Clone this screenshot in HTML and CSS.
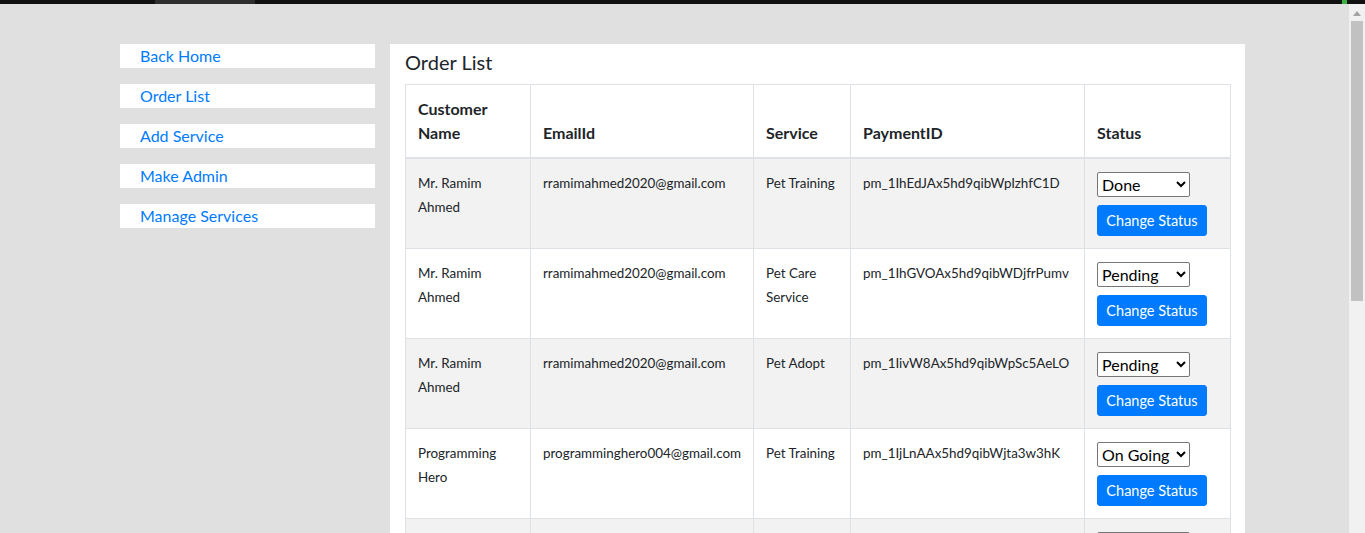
FILE: index.html
```html
<!DOCTYPE html>
<html lang="en">
<head>
<meta charset="utf-8">
<title>Order List</title>
<link rel="stylesheet" href="styles.css">
</head>
<body>
<div class="chrome-bar"><span class="seg"></span><span class="green"></span></div>
<div class="layout">
  <nav class="sidebar">
    <a class="side-link" href="#">Back Home</a>
    <a class="side-link" href="#">Order List</a>
    <a class="side-link" href="#">Add Service</a>
    <a class="side-link" href="#">Make Admin</a>
    <a class="side-link" href="#">Manage Services</a>
  </nav>
  <main class="panel">
    <h5 class="title">Order List</h5>
    <table class="orders">
      <colgroup>
        <col class="c-name"><col class="c-email"><col class="c-service"><col class="c-pay"><col class="c-status">
      </colgroup>
      <thead>
        <tr><th>Customer Name</th><th>EmailId</th><th>Service</th><th>PaymentID</th><th>Status</th></tr>
      </thead>
      <tbody>
        <tr><td>Mr. Ramim Ahmed</td><td>rramimahmed2020@gmail.com</td><td>Pet Training</td><td>pm_1IhEdJAx5hd9qibWpIzhfC1D</td>
          <td><div class="status"><select class="sel"><option>Pending</option><option>On Going</option><option selected>Done</option></select><button class="btn">Change Status</button></div></td></tr>
        <tr><td>Mr. Ramim Ahmed</td><td>rramimahmed2020@gmail.com</td><td>Pet Care Service</td><td>pm_1IhGVOAx5hd9qibWDjfrPumv</td>
          <td><div class="status"><select class="sel"><option selected>Pending</option><option>On Going</option><option>Done</option></select><button class="btn">Change Status</button></div></td></tr>
        <tr><td>Mr. Ramim Ahmed</td><td>rramimahmed2020@gmail.com</td><td>Pet Adopt</td><td>pm_1IivW8Ax5hd9qibWpSc5AeLO</td>
          <td><div class="status"><select class="sel"><option selected>Pending</option><option>On Going</option><option>Done</option></select><button class="btn">Change Status</button></div></td></tr>
        <tr><td>Programming Hero</td><td>programminghero004@gmail.com</td><td>Pet Training</td><td>pm_1IjLnAAx5hd9qibWjta3w3hK</td>
          <td><div class="status"><select class="sel"><option>Pending</option><option selected>On Going</option><option>Done</option></select><button class="btn">Change Status</button></div></td></tr>
        <tr><td>Programming Hero</td><td>programminghero004@gmail.com</td><td>Pet Adopt</td><td>pm_1IjLpZAx5hd9qibWkR2vX8aQ</td>
          <td><div class="status"><select class="sel"><option selected>Pending</option><option>On Going</option><option>Done</option></select><button class="btn">Change Status</button></div></td></tr>
        <tr><td>Mr. Ramim Ahmed</td><td>rramimahmed2020@gmail.com</td><td>Pet Care Service</td><td>pm_1IjMqWAx5hd9qibWnT4cQ2pL</td>
          <td><div class="status"><select class="sel"><option selected>Pending</option><option>On Going</option><option>Done</option></select><button class="btn">Change Status</button></div></td></tr>
      </tbody>
    </table>
  </main>
</div>
<div class="fake-scroll" aria-hidden="true">
  <svg class="arrow" width="8" height="5" viewBox="0 0 8 5"><path d="M4 0 L8 5 L0 5 Z" fill="#a3a3a3"/></svg>
  <div class="thumb"></div>
</div>
</body>
</html>
```

FILE: styles.css
```css
html, body {
  margin: 0;
  padding: 0;
}
body {
  background: #e0e0e0;
  font-family: "Lato", "Noto Sans", sans-serif;
  color: #212529;
}
.chrome-bar {
  height: 4px;
  background: #111;
  display: flex;
}
.chrome-bar .seg {
  margin-left: 155px;
  width: 100px;
  background: #2e2e2e;
}
.chrome-bar .green {
  margin-left: auto;
  margin-right: 18px;
  width: 5px;
  background: #3cb043;
}
.layout {
  display: flex;
  align-items: flex-start;
  gap: 15px;
  padding: 40px 0 40px 120px;
}
.sidebar {
  width: 255px;
  display: flex;
  flex-direction: column;
  gap: 16px;
  flex: none;
}
.side-link {
  display: block;
  background: #fff;
  color: #007bff;
  text-decoration: none;
  font-size: 16px;
  line-height: 24px;
  padding-left: 20px;
}
.panel {
  width: 825px;
  background: #fff;
  padding: 7px 15px 20px;
  flex: none;
}
.title {
  margin: 0 0 9px;
  font-size: 20px;
  font-weight: 400;
  line-height: 23px;
  padding-bottom: 1px;
}
.orders {
  width: 825px;
  table-layout: fixed;
  border-collapse: collapse;
}
.c-name { width: 125px; }
.c-email { width: 223px; }
.c-service { width: 97px; }
.c-pay { width: 234px; }
.c-status { width: 146px; }
.orders th, .orders td {
  border: 1px solid #dee2e6;
  padding: 12px;
  text-align: left;
}
.orders th {
  vertical-align: bottom;
  font-size: 16px;
  font-weight: 700;
  line-height: 24px;
  border-bottom: 2px solid #dee2e6;
}
.orders td {
  vertical-align: top;
  font-size: 13.4px;
  line-height: 24px;
  height: 65px;
  box-sizing: content-box;
}
.orders tbody tr:nth-child(odd) {
  background: #f2f2f2;
}
.status {
  display: flex;
  flex-direction: column;
  align-items: flex-start;
  gap: 8px;
  padding-top: 1px;
}
.sel {
  font-family: "Lato", "Noto Sans", sans-serif;
  font-size: 16px;
  height: 25px;
  width: 93px;
  color: #000;
  background: #fff;
  border: 1px solid #767676;
  border-radius: 2px;
}
.btn {
  font-family: "Lato", "Noto Sans", sans-serif;
  background: #007bff;
  color: #fff;
  border: 1px solid #007bff;
  border-radius: 3px;
  font-size: 14.5px;
  line-height: 21px;
  padding: 4px 6px;
  width: 110px;
}
.fake-scroll {
  position: fixed;
  top: 4px;
  right: 0;
  bottom: 0;
  width: 16px;
  background: #f1f1f1;
  display: flex;
  flex-direction: column;
  align-items: center;
}
.fake-scroll .arrow {
  margin-top: 7px;
  flex: none;
}
.fake-scroll .thumb {
  margin-top: 5px;
  width: 12px;
  height: 280px;
  background: #c1c1c1;
}
```
